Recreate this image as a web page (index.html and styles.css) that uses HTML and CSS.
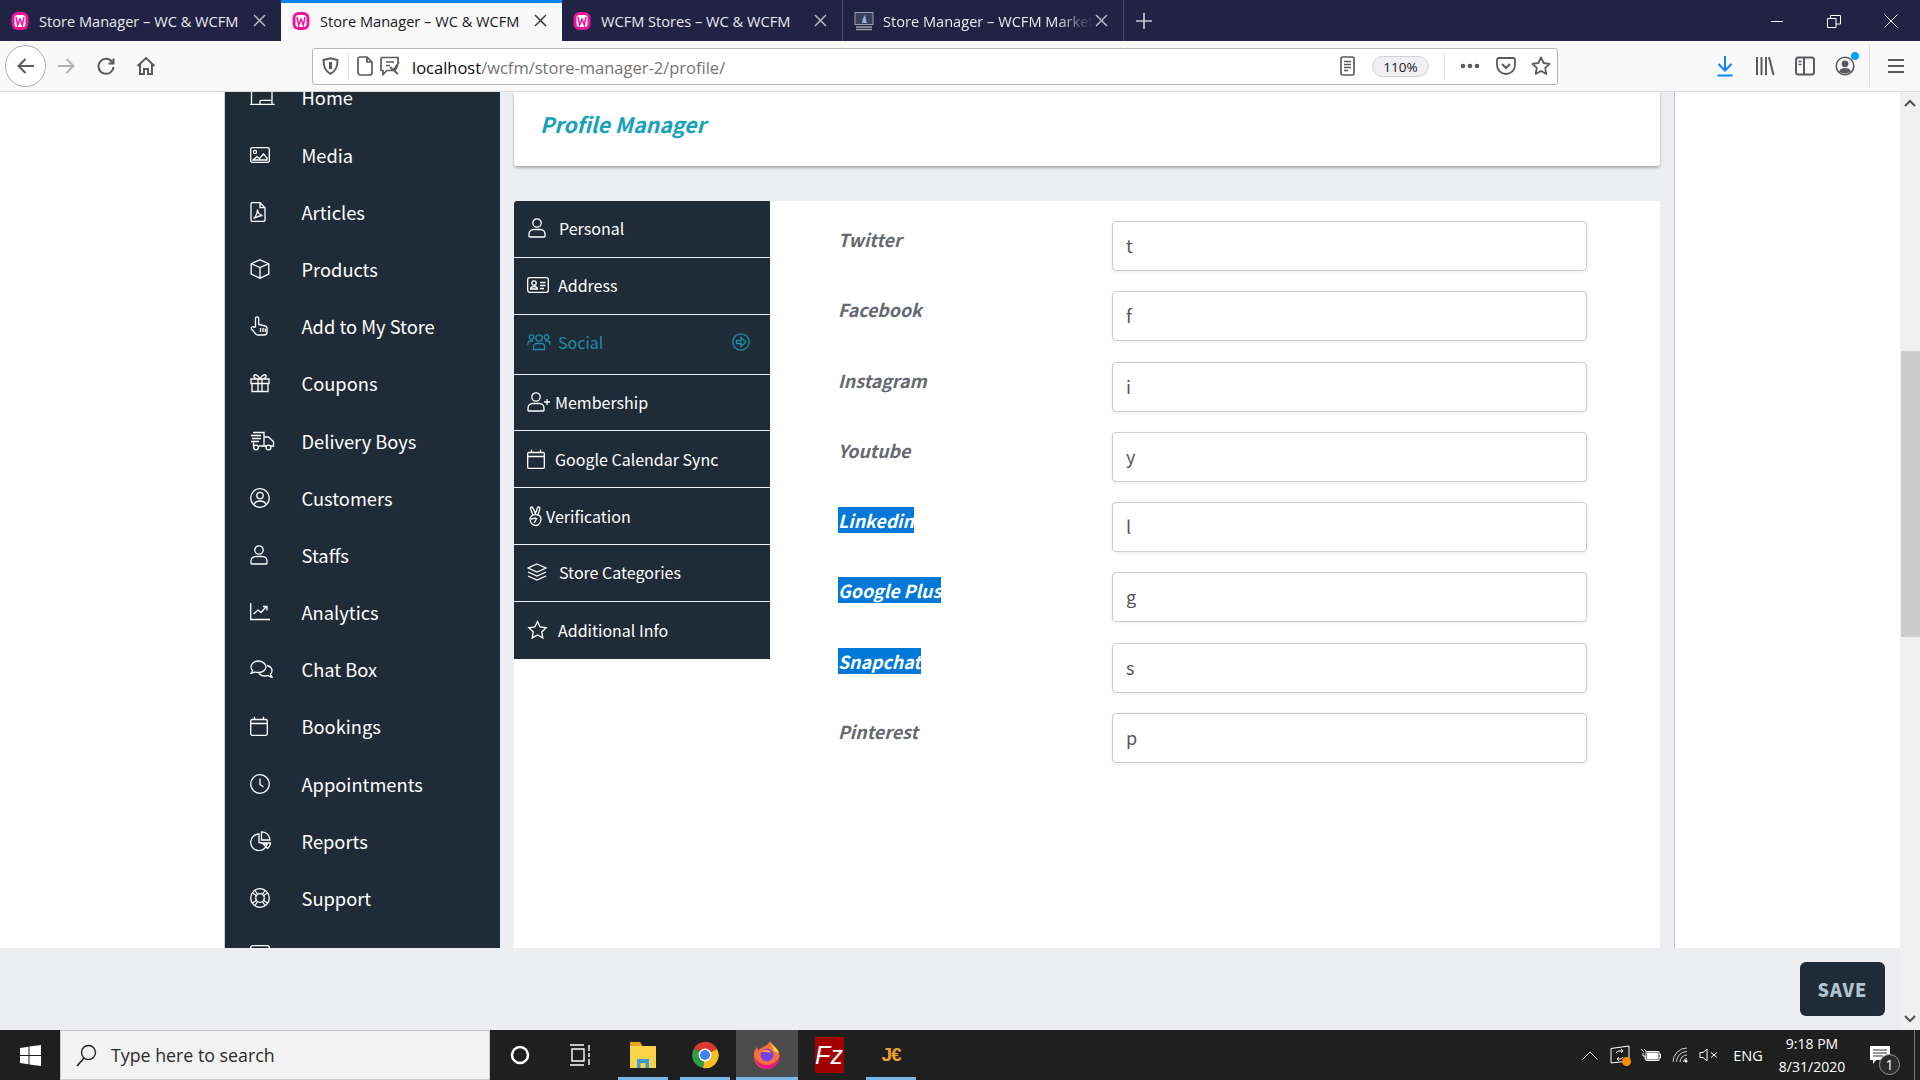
FILE: index.html
```html
<!DOCTYPE html>
<html lang="en">
<head>
    <meta charset="UTF-8">
    <title>Store Manager – WC &amp; WCFM</title>
    <link rel="stylesheet" href="styles.css">
</head>
<body>
    <!-- browser tabs -->
    <div class="tabbar">
        <div class="tab">
            <svg class="favicon" width="18" height="18" viewBox="0 0 18 18"><rect x=".5" y="0" width="17" height="18" rx="6" fill="#f0149b"/><rect x="3.500" y="3" width="11" height="12" rx="3" fill="#fff"/><path d="M5 5l1.700 8L9 7l2.300 6L13 5" fill="none" stroke="#f0149b" stroke-width="1.500"/></svg>
            <span class="tab-title">Store Manager – WC &amp; WCFM</span>
            <svg class="tab-close" width="13" height="13" viewBox="0 0 13 13"><path d="M1 1l11 11M12 1L1 12"/></svg>
        </div>
        <div class="tab active">
            <svg class="favicon" width="18" height="18" viewBox="0 0 18 18"><rect x=".5" y="0" width="17" height="18" rx="6" fill="#f0149b"/><rect x="3.500" y="3" width="11" height="12" rx="3" fill="#fff"/><path d="M5 5l1.700 8L9 7l2.300 6L13 5" fill="none" stroke="#f0149b" stroke-width="1.500"/></svg>
            <span class="tab-title">Store Manager – WC &amp; WCFM</span>
            <svg class="tab-close" width="13" height="13" viewBox="0 0 13 13"><path d="M1 1l11 11M12 1L1 12"/></svg>
        </div>
        <div class="tab sep">
            <svg class="favicon" width="18" height="18" viewBox="0 0 18 18"><rect x=".5" y="0" width="17" height="18" rx="6" fill="#f0149b"/><rect x="3.500" y="3" width="11" height="12" rx="3" fill="#fff"/><path d="M5 5l1.700 8L9 7l2.300 6L13 5" fill="none" stroke="#f0149b" stroke-width="1.500"/></svg>
            <span class="tab-title">WCFM Stores – WC &amp; WCFM</span>
            <svg class="tab-close" width="13" height="13" viewBox="0 0 13 13"><path d="M1 1l11 11M12 1L1 12"/></svg>
        </div>
        <div class="tab sep last">
            <svg class="favicon wide" width="20" height="20" viewBox="0 0 20 20"><rect x="1" y="1.500" width="18" height="12" fill="#39415e" stroke="#9aa0ad"/><path d="M8 12l1-5 2-3 1 5 1 3z" fill="#8fb8d8"/><path d="M2 16h16M2 18.500h16" stroke="#9aa0ad" stroke-width="1.400"/></svg>
            <span class="tab-title fade">Store Manager – WCFM Marketplace</span>
            <svg class="tab-close" width="13" height="13" viewBox="0 0 13 13"><path d="M1 1l11 11M12 1L1 12"/></svg>
        </div>
        <svg class="new-tab" width="18" height="18" viewBox="0 0 18 18"><path d="M9 1v16M1 9h16" stroke="#c8c9d2" stroke-width="1.700"/></svg>
        <div class="window-btns">
            <svg width="14" height="14" viewBox="0 0 14 14"><path d="M1 7.500h12" stroke="#fff"/></svg>
            <svg width="14" height="14" viewBox="0 0 14 14"><path d="M.5 4.500h8.500v9H.5zM3.500 4.500V1.500h10v8.500H9" fill="none" stroke="#fff" stroke-linejoin="round"/></svg>
            <svg width="14" height="14" viewBox="0 0 14 14"><path d="M.5.500l13 13M13.500.500l-13 13" stroke="#fff"/></svg>
        </div>
    </div>

    <!-- browser toolbar -->
    <div class="toolbar">
        <div class="tool-btn back">
            <svg width="20" height="20" viewBox="0 0 20 20" class="tool-ico"><path d="M18 10H2.500M9.500 3l-7 7 7 7"/></svg>
        </div>
        <div class="tool-btn forward">
            <svg width="20" height="20" viewBox="0 0 20 20" class="tool-ico"><path d="M2 10h15.500M10.500 3l7 7-7 7"/></svg>
        </div>
        <div class="tool-btn">
            <svg width="20" height="20" viewBox="0 0 20 20" class="tool-ico"><path d="M16.500 6.500A7.500 7.500 0 1 0 17.500 11M17.500 2.500v5h-5"/></svg>
        </div>
        <div class="tool-btn">
            <svg width="20" height="20" viewBox="0 0 20 20" class="tool-ico"><path d="M1.500 10L10 2l8.500 8M4 8v10h4v-5h4v5h4V8"/></svg>
        </div>

        <div class="urlbar">
            <svg width="17" height="18" viewBox="0 0 17 18" class="tool-ico"><path d="M8.500 1.200L15.500 3c0 7-1.500 11-7 13.800C3 14 1.500 10 1.500 3z"/><path d="M8.500 5v7" stroke-width="3"/></svg>
            <span class="url-sep first"></span>
            <svg class="url-page" width="16" height="20" viewBox="0 0 16 20"><path d="M3 1h7l5 5v10.500a2.500 2.500 0 0 1-2.500 2.500h-9A2.500 2.500 0 0 1 1 16.500V3a2 2 0 0 1 2-2zM10 1v5h5" fill="none" stroke="#5b5b5f" stroke-width="1.700"/></svg>
            <svg class="url-perm" width="23" height="20" viewBox="0 0 23 20"><path d="M2 1.500h17v5M19 9l-3 5.500H8l-4 4v-4H2v-13M7 6h8M7 9.500h4M11 11l8 7M20 6l-6 9" fill="none" stroke="#5b5b5f" stroke-width="1.700"/></svg>
            <span class="url-text"><b>localhost</b>/wcfm/store-manager-2/profile/</span>
            <svg class="url-reader" width="15" height="20" viewBox="0 0 15 20"><rect x="1" y="1" width="13" height="18" rx="1.500" fill="none" stroke="#5b5b5f" stroke-width="1.700"/><path d="M4 5.500h7M4 8.500h7M4 11.500h7M4 14.500h4" stroke="#5b5b5f" stroke-width="1.300"/></svg>
            <span class="zoom-pill">110%</span>
            <span class="url-sep"></span>
            <svg class="url-dots" width="20" height="6" viewBox="0 0 20 6"><circle cx="3" cy="3" r="2.300" fill="#5b5b5f"/><circle cx="10" cy="3" r="2.300" fill="#5b5b5f"/><circle cx="17" cy="3" r="2.300" fill="#5b5b5f"/></svg>
            <svg class="url-pocket" width="20" height="20" viewBox="0 0 20 20"><path d="M3 2h14a2 2 0 0 1 2 2v5c0 5-4 9-9 9s-9-4-9-9V4a2 2 0 0 1 2-2z" fill="none" stroke="#5b5b5f" stroke-width="1.800"/><path d="M6 8l4 4 4-4" fill="none" stroke="#5b5b5f" stroke-width="2"/></svg>
            <svg class="url-star" width="20" height="20" viewBox="0 0 20 20"><path d="M10 1.500l2.600 5.500 6 .8-4.400 4.100 1.100 6L10 15l-5.300 2.900 1.100-6L1.400 7.800l6-.8z" fill="none" stroke="#5b5b5f" stroke-width="1.800" stroke-linejoin="round"/></svg>
        </div>

        <div class="tool-btn push">
            <svg width="18" height="22" viewBox="0 0 18 22"><path d="M9 1v14M2.500 9L9 15.500 15.500 9" fill="none" stroke="#0a84ff" stroke-width="2"/><path d="M1.500 20.500h15" stroke="#0a84ff" stroke-width="2"/></svg>
        </div>
        <div class="tool-btn">
            <svg width="20" height="20" viewBox="0 0 20 20"><path d="M2 1v18M6.500 1v18M11 1v18M14 1l4.500 18" stroke="#5b5b5f" stroke-width="2"/></svg>
        </div>
        <div class="tool-btn">
            <svg width="20" height="20" viewBox="0 0 20 20" class="tool-ico"><rect x="1" y="1.500" width="18" height="17" rx="2.500"/><path d="M9 1.500v17"/><path d="M3.500 5.500h3M3.500 8.500h3" stroke-width="1.300"/></svg>
        </div>
        <div class="tool-btn account">
            <svg width="20" height="20" viewBox="0 0 20 20"><circle cx="10" cy="10" r="8.800" fill="none" stroke="#5b5b5f" stroke-width="1.600"/><circle cx="10" cy="7.800" r="3.400" fill="#5b5b5f"/><path d="M4 15.500c1-3 3-3.500 6-3.500s5 .5 6 3.500c-3 2.500-9 2.500-12 0z" fill="#5b5b5f"/></svg>
            <span class="account-dot"></span>
        </div>
        <span class="toolbar-sep"></span>
        <div class="tool-btn">
            <svg width="16" height="16" viewBox="0 0 16 16"><path d="M0 2h16M0 8h16M0 14h16" stroke="#5b5b5f" stroke-width="2.200"/></svg>
        </div>
    </div>

    <div class="viewport">
        <div class="page">
            <div class="scroll-area">
                <div class="wcfm">
                    <ul class="sidebar">
                        <li><svg class="ico" width="25" height="20" viewBox="0 0 25 20"><path d="M1.500 0v17.300M0 17.300h24.600M10 17.300v-3q0-1 1-1h10q1 0 1 1v3M22 13.300V0"/></svg>Home</li>
                        <li><svg class="ico" width="20" height="20" viewBox="0 0 20 20"><rect x=".7" y="2.700" width="18.600" height="14.600" rx="1.500"/><circle cx="5" cy="7" r="1.600"/><path d="M3 15l4-3.500 2.500 2 4-4.500 3.500 4v2z"/></svg>Media</li>
                        <li><svg class="ico" width="16" height="20" viewBox="0 0 16 20"><path d="M1 1.700q0-1 1-1h8l5 5v12.600q0 1-1 1H2q-1 0-1-1zM10 .7v5h5M3.500 16.500C6 15 7.500 10 7.500 7.500 8 11 10 13 12.500 13.500 9.500 13.500 6 15 3.500 16.500z"/></svg>Articles</li>
                        <li><svg class="ico" width="20" height="20" viewBox="0 0 20 20"><path d="M10 .8l8.800 3.800v10.600L10 19.200l-8.800-4V4.600zM1.200 4.600l8.800 4 8.800-4M10 8.600v10.600"/></svg>Products</li>
                        <li><svg class="ico" width="19" height="20" viewBox="0 0 19 20"><path d="M5.500 11V2.400a1.600 1.600 0 0 1 3.200 0v6.100l6.500 1.500a2 2 0 0 1 1.800 2V16a3 3 0 0 1-3 3H8a3 3 0 0 1-2.400-1.200L1.600 13A1.500 1.500 0 0 1 4 11.200zM10.500 12v4M13 12v4M15.300 12.500V16"/></svg>Add to My Store</li>
                        <li><svg class="ico" width="20" height="20" viewBox="0 0 20 20"><path d="M1 6h18v4.500H1zM2 10.500h16v8H2zM8 6v12.500M12 6v12.500M10 6C8 2 5 .8 4 2.500 3 4.500 6 6 10 6c4 0 7-1.500 6-3.500C15 .8 12 2 10 6z"/></svg>Coupons</li>
                        <li><svg class="ico" width="25" height="20" viewBox="0 0 25 20"><path d="M3 1.500h11V15H9M14 6h4.500l5 4.800V15H21M1 4.500h10M2 7.500h9M1 10.500h8M3.500 11.500V15M14 15h2"/><circle cx="6" cy="16.500" r="2.400"/><circle cx="18.500" cy="16.500" r="2.400"/></svg>Delivery Boys</li>
                        <li><svg class="ico" width="20" height="20" viewBox="0 0 20 20"><circle cx="10" cy="10" r="9.300"/><circle cx="10" cy="7.600" r="3.200"/><path d="M4 16.500c1-3 3-3.500 6-3.500s5 .5 6 3.500"/></svg>Customers</li>
                        <li><svg class="ico" width="18" height="20" viewBox="0 0 18 20"><circle cx="9" cy="5" r="4.200"/><path d="M1 18.300V16a4.500 4.500 0 0 1 4.500-4.500h7A4.500 4.500 0 0 1 17 16v2.300a.7.7 0 0 1-.7.7H1.700a.7.7 0 0 1-.7-.7z"/></svg>Staffs</li>
                        <li><svg class="ico" width="20" height="20" viewBox="0 0 20 20"><path d="M.7 1v16.500H20M3.500 12L8 8l3 2.500L16 5M13 4.500h4v4"/></svg>Analytics</li>
                        <li><svg class="ico" width="23" height="20" viewBox="0 0 23 20"><path d="M8.500 2C4.500 2 1 4.500 1 8c0 1.500.7 2.800 1.700 3.800-.4 1-1.200 2-1.700 2.500 1.500 0 3-.7 4-1.300 1 .4 2 .5 3.500.5 4 0 7.500-2.500 7.500-5.500S12.500 2 8.500 2zM17 6.500c3 .7 5 2.800 5 5.300 0 1.400-.6 2.600-1.600 3.500.3 1 1 2 1.600 2.700-1.500-.1-3-.8-4-1.500-1 .3-2 .5-3 .5-2.500 0-4.800-1-6-2.700"/></svg>Chat Box</li>
                        <li><svg class="ico" width="18" height="20" viewBox="0 0 18 20"><rect x=".7" y="3.500" width="16.600" height="15.800" rx="1.500"/><path d="M.7 7.500h16.600M4.500.7v2.800M13.500.7v2.800"/></svg>Bookings</li>
                        <li><svg class="ico" width="20" height="20" viewBox="0 0 20 20"><circle cx="10" cy="10" r="9.300"/><path d="M10 4.500v6l3.500 2.500"/></svg>Appointments</li>
                        <li><svg class="ico" width="21" height="20" viewBox="0 0 21 20"><path d="M9 3a8.300 8.300 0 1 0 8 10.500l-8-2zM11.500.8A8 8 0 0 1 19.800 9h-8.300zM12 12h8.500a8 8 0 0 1-3 5.500z"/></svg>Reports</li>
                        <li><svg class="ico" width="20" height="20" viewBox="0 0 20 20"><circle cx="10" cy="10" r="9.300"/><circle cx="10" cy="10" r="4.300"/><path d="M2.500 5l4.500 3M5 2.500l3 4.500M17.500 5L13 8M15 2.500L12 7M2.500 15L7 12M5 17.500L8 13M17.500 15L13 12M15 17.500L12 13"/></svg>Support</li>
                        <li><svg class="ico" width="20" height="20" viewBox="0 0 20 20"><rect x=".7" y=".7" width="18.600" height="15" rx="2"/></svg></li>
                    </ul>

                    <div class="main">
                        <div class="title-card">
                            <h2>Profile Manager</h2>
                        </div>
                        <div class="profile-card">
                            <ul class="profile-nav">
                                <li><svg class="ico gap-12" width="20" height="20" viewBox="0 0 18 20"><circle cx="9" cy="5" r="4.200"/><path d="M1 18.300V16a4.500 4.500 0 0 1 4.500-4.500h7A4.500 4.500 0 0 1 17 16v2.300a.7.7 0 0 1-.7.7H1.700a.7.7 0 0 1-.7-.7z"/></svg>Personal</li>
                                <li><svg class="ico gap-9" width="22" height="18" viewBox="0 0 22 18"><rect x=".7" y="1.700" width="20.600" height="14.600" rx="2"/><circle cx="7" cy="7" r="2.200"/><path d="M3.500 13c.3-2 1.500-2.500 3.500-2.500s3.200.5 3.500 2.500zM13 6.500h5.500M13 9.500h5.500M13 12.500h4"/></svg>Address</li>
                                <li class="current"><svg class="ico gap-7" width="24" height="18" viewBox="0 0 24 18"><circle cx="12" cy="5" r="3.200"/><circle cx="4.500" cy="4" r="2.300"/><circle cx="19.500" cy="4" r="2.300"/><path d="M6.500 16.500v-3a3 3 0 0 1 3-3h5a3 3 0 0 1 3 3v3zM1 12v-1.500A2.500 2.500 0 0 1 3.500 8H6M23 12v-1.500A2.500 2.500 0 0 0 20.500 8H18"/></svg>Social<svg class="ico arrow" width="18" height="18" viewBox="0 0 18 18"><circle cx="9" cy="9" r="8.200"/><path d="M4.500 7.500H9v-3L14 9l-5 4.500v-3H4.500z"/></svg></li>
                                <li><svg class="ico gap-4" width="24" height="20" viewBox="0 0 24 20"><circle cx="9" cy="5" r="4.200"/><path d="M1 18.300V16a4.500 4.500 0 0 1 4.500-4.500h7A4.500 4.500 0 0 1 17 16v2.300a.7.7 0 0 1-.7.7H1.700a.7.7 0 0 1-.7-.7zM20 7v6M17 10h6"/></svg>Membership</li>
                                <li><svg class="ico gap-10" width="18" height="20" viewBox="0 0 18 20"><rect x=".7" y="3.500" width="16.600" height="15.800" rx="1"/><path d="M.7 7.500h16.600M4.500.7v2.800M13.500.7v2.800"/></svg>Google Calendar Sync</li>
                                <li><svg class="ico gap-2 peace" width="17" height="20" viewBox="0 0 17 20"><path d="M6 9.500L3.500 2.600a1.200 1.200 0 0 1 2.300-.8L8.500 7.500 10.500 1.800a1.200 1.200 0 0 1 2.300.8L11 9M3 12.500a5.500 6.500 0 1 0 11 1c0-2.500-1-4-3-4.500-2-.5-5 0-6.500 1zM4 13l5-1M7 17l3-5"/></svg>Verification</li>
                                <li><svg class="ico gap-12" width="20" height="18" viewBox="0 0 20 18"><path d="M10 1l9 4-9 4-9-4zM1 9l9 4 9-4M1 13l9 4 9-4"/></svg>Store Categories</li>
                                <li><svg class="ico gap-10" width="21" height="20" viewBox="0 0 20 20"><path d="M10 1.500l2.600 5.500 6 .8-4.400 4.100 1.100 6L10 15l-5.300 2.900 1.100-6L1.400 7.800l6-.8z"/></svg>Additional Info</li>
                            </ul>

                            <form class="social-form">
                                <div class="field"><label>Twitter</label><input type="text" value="t"></div>
                                <div class="field"><label>Facebook</label><input type="text" value="f"></div>
                                <div class="field"><label>Instagram</label><input type="text" value="i"></div>
                                <div class="field"><label>Youtube</label><input type="text" value="y"></div>
                                <div class="field"><label><span class="selected">Linkedin</span></label><input type="text" value="l"></div>
                                <div class="field"><label><span class="selected">Google Plus</span></label><input type="text" value="g"></div>
                                <div class="field"><label><span class="selected">Snapchat</span></label><input type="text" value="s"></div>
                                <div class="field"><label>Pinterest</label><input type="text" value="p"></div>
                            </form>
                        </div>
                    </div>
                </div>
            </div>
            <div class="footer">
                <button class="save-btn" type="button">SAVE</button>
            </div>
        </div>

        <div class="scrollbar">
            <svg width="12" height="8" viewBox="0 0 12 8"><path d="M1 7l5-5 5 5" fill="none" stroke="#505050" stroke-width="2"/></svg>
            <div class="track"><div class="thumb"></div></div>
            <svg width="12" height="8" viewBox="0 0 12 8"><path d="M1 1l5 5 5-5" fill="none" stroke="#505050" stroke-width="2"/></svg>
        </div>
    </div>

    <!-- windows taskbar -->
    <div class="taskbar">
        <div class="start">
            <svg width="21" height="21" viewBox="0 0 21 21"><path d="M0 3l8.500-1.200V10H0zM9.500 1.600L21 0v10H9.500zM0 11h8.500v8.200L0 18zM9.500 11H21v10L9.500 19.400z" fill="#fff"/></svg>
        </div>
        <div class="search">
            <svg width="21" height="23" viewBox="0 0 21 23"><circle cx="12.500" cy="8.500" r="7" fill="none" stroke="#222" stroke-width="1.400"/><path d="M8 14L1 22" stroke="#222" stroke-width="1.600"/></svg>
            <span>Type here to search</span>
        </div>
        <div class="task-cell narrow">
            <svg width="20" height="20" viewBox="0 0 20 20"><circle cx="10" cy="10" r="8" fill="none" stroke="#fff" stroke-width="2.500"/></svg>
        </div>
        <div class="task-cell narrow">
            <svg width="22" height="24" viewBox="0 0 22 24"><path d="M1 2h14M1 22h14M3 6h12v12H3zM20 2v6M20 10v4M20 16v6" fill="none" stroke="#fff" stroke-width="1.400"/></svg>
        </div>
        <div class="task-cell first-app running">
            <svg width="28" height="28" viewBox="0 0 28 28"><path d="M1 1h10l2 3h0v2H1z" fill="#e8a317"/><path d="M1 5h26v22H1z" fill="#fbd34a"/><path d="M8 27v-9h12v9h-3.500v-5h-5v5z" fill="#3a9bdc"/></svg>
        </div>
        <div class="task-cell running">
            <svg width="28" height="28" viewBox="0 0 28 28"><path d="M14 14L3 7.500A13 13 0 0 1 26 8z" fill="#d93a2f"/><path d="M14 14L3 7.500A13 13 0 0 0 12 27z" fill="#2f9e44"/><path d="M14 14l12-6A13 13 0 0 1 12 27z" fill="#f4bf21"/><circle cx="14" cy="14" r="6.500" fill="#fff"/><circle cx="14" cy="14" r="5" fill="#3f83ea"/></svg>
        </div>
        <div class="task-cell running active-app">
            <svg width="30" height="30" viewBox="0 0 30 30"><path d="M18 1c1 4 7 6 9 12 2 8-4 16-12 16S2 23 2 15c0-3 1-6 3-8l1 4c2-4 7-4 9-6 1-1 2-2 3-4z" fill="#ff7139"/><path d="M2.500 17c1 6 6 12 12.500 12 7 0 12-6 12-12-2 5-7 8-12 8S5 22 2.500 17z" fill="#e31587"/><path d="M18 1c1 4 7 6 9 12l-5-2c-1-4-3-6-4-10z" fill="#ffd43b"/><circle cx="15" cy="15" r="6.500" fill="#7542e5"/><path d="M9 12c3-3 9-3 10 1-3-1-7-1-10-1z" fill="#ff9a3c"/></svg>
        </div>
        <div class="task-cell">
            <span class="fz-logo">Fz</span>
        </div>
        <div class="task-cell running">
            <span class="je-logo">J€</span>
        </div>

        <div class="tray">
            <div class="tray-cell w30">
                <svg width="16" height="9" viewBox="0 0 16 9"><path d="M.5 8.500L8 1l7.500 7.500" fill="none" stroke="#fff"/></svg>
            </div>
            <div class="tray-cell w30 update">
                <svg width="21" height="20" viewBox="0 0 21 20"><path d="M1 3.500L19 1v15L1 18zM6 8q1-2 3-2h4M11 4l2 2-2 2M13 12q-1 2-3 2H7M9 16l-2-2 2-2" fill="none" stroke="#fff"/></svg>
                <span class="update-dot"></span>
            </div>
            <div class="tray-cell w30">
                <svg width="21" height="14" viewBox="0 0 21 14"><path d="M6 3.500h13v9H6zM19 6h1.500v4H19M1 1l3 3M4 1l3 3M3 5v3h2v3h1" fill="none" stroke="#fff"/><rect x="7" y="4.500" width="11" height="7" fill="#fff"/></svg>
            </div>
            <div class="tray-cell w29">
                <svg width="16" height="16" viewBox="0 0 16 16"><path d="M1 15A14 14 0 0 1 15 1M4.500 15A10.500 10.500 0 0 1 15 4.500M8 15A7 7 0 0 1 15 8M11.500 15A3.500 3.500 0 0 1 15 11.500" fill="none" stroke="#cfcfcf"/><circle cx="14" cy="14" r="1.500" fill="#fff"/></svg>
            </div>
            <div class="tray-cell w28">
                <svg width="19" height="14" viewBox="0 0 19 14"><path d="M1 4.500h3L8 1v12L4 9.500H1zM12 4.500l6 5M18 4.500l-6 5" fill="none" stroke="#fff"/></svg>
            </div>
            <div class="tray-cell lang">ENG</div>
            <div class="clock">
                <span>9:18 PM</span>
                <span>8/31/2020</span>
            </div>
            <div class="notify">
                <svg width="20" height="18" viewBox="0 0 20 18"><path d="M0 0h20v14H6l-3 4v-4H0z" fill="#fff"/><path d="M3 4h14M3 7h14M3 10h10" stroke="#333" stroke-width="1"/></svg>
                <span class="notify-count">1</span>
            </div>
            <div class="show-desktop"></div>
        </div>
    </div>
</body>
</html>
```
FILE: styles.css
```css
* {
    box-sizing: border-box;
}

html, body {
    margin: 0;
    padding: 0;
    height: 100%;
}

body {
    width: 1920px;
    height: 1080px;
    display: flex;
    flex-direction: column;
    overflow: hidden;
    background: #fff;
    font-family: "Noto Sans CJK SC", "Noto Sans", sans-serif;
}

ul {
    list-style: none;
    margin: 0;
    padding: 0;
}

svg {
    flex: none;
    display: block;
}

/* browser tabs */
.tabbar {
    height: 41px;
    flex: none;
    display: flex;
    align-items: stretch;
    background: #202344;
    font-family: "Open Sans", sans-serif;
    font-size: 14.600px;
    color: #e8e8ee;
}

.tab {
    width: 281px;
    display: flex;
    align-items: center;
    padding: 0 15px 0 11px;
}

.tab.sep {
    border-right: 1px solid #4a4d68;
}

.tab.active {
    background: #f9f9fa;
    color: #18181a;
    border-top: 3px solid #0a84ff;
    padding-bottom: 3px;
}

.favicon {
    margin-right: 10px;
}

.favicon.wide {
    margin-right: 9px;
}

.tab-title {
    flex: 1;
    min-width: 0;
    white-space: nowrap;
    overflow: hidden;
}

.tab-title.fade {
    -webkit-mask-image: linear-gradient(to right, #000 82%, transparent 100%);
    mask-image: linear-gradient(to right, #000 82%, transparent 100%);
}

.tab-close {
    margin-left: 8px;
    fill: none;
    stroke: #b9bac6;
    stroke-width: 1.500;
}

.last .tab-close {
    margin-left: 2px;
}

.active .tab-close {
    stroke: #3a3a3f;
}

.new-tab {
    align-self: center;
    margin-left: 11px;
}

.window-btns {
    margin-left: auto;
    display: flex;
    align-items: center;
    gap: 43px;
    padding-right: 22px;
}

/* browser toolbar */
.toolbar {
    height: 51px;
    flex: none;
    display: flex;
    align-items: center;
    padding: 0 4px 0 5px;
    background: #f9f9fa;
    border-bottom: 1px solid #d7d7db;
}

.tool-btn {
    width: 40px;
    height: 40px;
    flex: none;
    display: flex;
    align-items: center;
    justify-content: center;
    position: relative;
}

.tool-btn.back {
    width: 41px;
    height: 42px;
    background: #fff;
    border: 1px solid #b1b1b3;
    border-radius: 50%;
}

.tool-btn.push {
    margin-left: auto;
}

.tool-ico {
    fill: none;
    stroke: #5b5b5f;
    stroke-width: 2;
}

.forward .tool-ico {
    stroke: #b1b1b3;
}

.account-dot {
    position: absolute;
    top: 6px;
    right: 6px;
    width: 8px;
    height: 8px;
    border-radius: 50%;
    background: #0a9dff;
}

.toolbar-sep {
    width: 1px;
    height: 42px;
    background: #e0e0e2;
    margin: 0 6px 0 4px;
}

.urlbar {
    width: 1246px;
    height: 37px;
    margin-left: 146px;
    display: flex;
    align-items: center;
    padding-left: 9px;
    background: #fff;
    border: 1px solid #b8b8bb;
    border-radius: 3px;
    color: #737373;
    font-family: "Open Sans", sans-serif;
    font-size: 16.500px;
}

.url-sep {
    width: 1px;
    height: 26px;
    background: #e0e0e2;
    margin: 0 15px 0 15px;
}

.url-sep.first {
    margin: 0 8px 0 9px;
}

.url-perm {
    margin-left: 6px;
}

.url-text {
    flex: 1;
    margin-left: 10px;
    padding-top: 2px;
    white-space: nowrap;
}

.url-text b {
    font-weight: 400;
    color: #0c0c0d;
}

.zoom-pill {
    width: 57px;
    height: 21px;
    margin-left: 17px;
    text-align: center;
    line-height: 20px;
    font-size: 13.500px;
    color: #18181a;
    background: #f0f0f2;
    border: 1px solid #d0d0d4;
    border-radius: 11px;
}

.url-pocket {
    margin-left: 16px;
}

.url-star {
    margin: 0 6px 0 15px;
}

/* page area */
.viewport {
    flex: 1;
    min-height: 0;
    display: flex;
}

.page {
    flex: 1;
    min-width: 0;
    display: flex;
    flex-direction: column;
}

.scroll-area {
    flex: 1;
    min-height: 0;
    overflow: hidden;
    padding-left: 224px;
    background: #fff;
}

.wcfm {
    width: 1451px;
    height: 100%;
    display: flex;
    background: #eceef2;
    border-left: 1px solid #cfcfcf;
    border-right: 1px solid #c4c4c4;
}

.sidebar {
    width: 275px;
    flex: none;
    height: 100%;
    overflow: hidden;
    background: #1f2b37;
    color: #fff;
    font-size: 18.300px;
}

.sidebar li {
    height: 57.200px;
    display: grid;
    grid-template-columns: 51.500px 1fr;
    align-items: center;
    padding-left: 25px;
}

/* list is scrolled a little, Home sits under the toolbar */
.sidebar li:first-child {
    margin-top: -23.200px;
}

.ico {
    fill: none;
    stroke: currentColor;
    stroke-width: 1.300;
}

.main {
    flex: 1;
    min-width: 0;
    height: 100%;
    display: flex;
    flex-direction: column;
    gap: 35px;
    padding: 0 14px;
}

.title-card {
    height: 74px;
    flex: none;
    display: flex;
    align-items: center;
    padding: 0 0 11px 26px;
    background: #fff;
    border-radius: 0 0 3px 3px;
    box-shadow: 0 2px 3px rgba(0, 0, 0, 0.28);
}

.title-card h2 {
    margin: 0;
    font-size: 21.300px;
    font-style: italic;
    font-weight: 700;
    color: #17a2b8;
}

.profile-card {
    flex: 1;
    min-height: 0;
    display: flex;
    align-items: flex-start;
    background: #fff;
}

.profile-nav {
    width: 256px;
    flex: none;
    background: #1f2b37;
    color: #fff;
    font-size: 16px;
    border-radius: 3px 0 0 0;
}

.profile-nav li {
    height: 56.800px;
    display: flex;
    align-items: center;
    padding: 0 0 1px 13px;
    border-bottom: 1.500px solid #eef0f3;
}

.profile-nav li:last-child {
    border-bottom: 0;
}

.profile-nav li.current {
    height: 60px;
    padding-bottom: 4px;
    color: #1b8fa8;
}

.gap-2 { margin-right: 2px; }
.gap-4 { margin-right: 4px; }
.gap-7 { margin-right: 7px; }
.gap-9 { margin-right: 9px; }
.gap-10 { margin-right: 10px; }
.gap-12 { margin-right: 12px; }

.ico.arrow {
    margin-left: auto;
    margin-right: 20px;
}

.social-form {
    flex: 1;
    padding: 20px 0 0 68px;
    display: flex;
    flex-direction: column;
    gap: 20.300px;
}

.field {
    height: 50px;
    display: flex;
}

.field label {
    width: 274px;
    flex: none;
    padding-top: 5px;
    line-height: 26px;
    font-size: 17.800px;
    font-style: italic;
    font-weight: 700;
    color: #666a70;
}

.selected {
    display: inline-block;
    background: #0078d7;
    color: #fff;
}

.field input {
    width: 475px;
    height: 50px;
    padding: 0 13px 2px;
    font-family: inherit;
    font-size: 18px;
    color: #555;
    background: #fff;
    border: 1px solid #ccc;
    border-radius: 4px;
    box-shadow: 0 1px 4px rgba(0, 0, 0, 0.08);
}

.footer {
    height: 82px;
    flex: none;
    display: flex;
    align-items: flex-start;
    justify-content: flex-end;
    padding: 14px 15px 0 0;
    background: #eceef2;
}

.save-btn {
    width: 85px;
    height: 54px;
    font-family: inherit;
    font-size: 18px;
    font-weight: 900;
    letter-spacing: 1px;
    color: #b0c4d0;
    background: #1f2b37;
    border: 0;
    border-radius: 6px;
}

.scrollbar {
    width: 20px;
    flex: none;
    display: flex;
    flex-direction: column;
    align-items: center;
    padding: 7px 0;
    background: #f0f0f0;
}

.track {
    flex: 1;
    width: 100%;
    margin-top: 3px;
}

.thumb {
    width: 19px;
    height: 286px;
    margin: 241px 0 0 1px;
    background: #cdcdcd;
}

/* windows taskbar */
.taskbar {
    height: 50px;
    flex: none;
    display: flex;
    align-items: stretch;
    background: #1f1f1f;
    color: #fff;
    font-family: "Open Sans", sans-serif;
}

.start {
    width: 60px;
    display: flex;
    align-items: center;
    justify-content: center;
}

.search {
    width: 430px;
    display: flex;
    align-items: center;
    gap: 14px;
    padding-left: 15px;
    background: #f2f2f2;
    border: 1px solid #c8c8c8;
    color: #2b2b2b;
    font-size: 17.800px;
}

.task-cell {
    width: 62px;
    display: flex;
    align-items: center;
    justify-content: center;
    position: relative;
}

.task-cell.narrow {
    width: 60px;
}

.task-cell.first-app {
    margin-left: 2px;
}

.task-cell.running::after {
    content: "";
    position: absolute;
    left: 6px;
    right: 6px;
    bottom: 0;
    height: 3px;
    background: #76b9ed;
}

.task-cell.active-app {
    background: #4c4c4c;
}

.task-cell.active-app::after {
    left: 0;
    right: 0;
}

.fz-logo {
    width: 29px;
    height: 36px;
    display: flex;
    align-items: center;
    justify-content: center;
    background: #a50000;
    color: #fff;
    font-family: "Liberation Sans", sans-serif;
    font-size: 25px;
    font-style: italic;
}

.je-logo {
    color: #f0a030;
    font-family: "Liberation Sans", sans-serif;
    font-size: 19px;
    font-weight: 700;
    letter-spacing: -1px;
}

.tray {
    margin-left: auto;
    display: flex;
    align-items: stretch;
}

.tray-cell {
    display: flex;
    align-items: center;
    justify-content: center;
    position: relative;
}

.w28 { width: 28px; }
.w29 { width: 29px; }
.w30 { width: 30px; }

.update-dot {
    position: absolute;
    left: 17px;
    top: 27px;
    width: 9px;
    height: 9px;
    border-radius: 50%;
    background: #ff8c00;
}

.lang {
    width: 52px;
    font-size: 14.500px;
}

.clock {
    width: 76px;
    display: flex;
    flex-direction: column;
    align-items: center;
    justify-content: center;
    gap: 4px;
    font-size: 14px;
    line-height: 19px;
}

.notify {
    width: 64px;
    position: relative;
    display: flex;
    align-items: center;
    padding-left: 20px;
}

.notify-count {
    position: absolute;
    left: 29px;
    top: 24px;
    width: 21px;
    height: 21px;
    text-align: center;
    line-height: 19px;
    font-size: 14px;
    background: #2b2b2b;
    border: 1px solid #999;
    border-radius: 50%;
}

.show-desktop {
    width: 6px;
    border-left: 1px solid #777;
}
```
